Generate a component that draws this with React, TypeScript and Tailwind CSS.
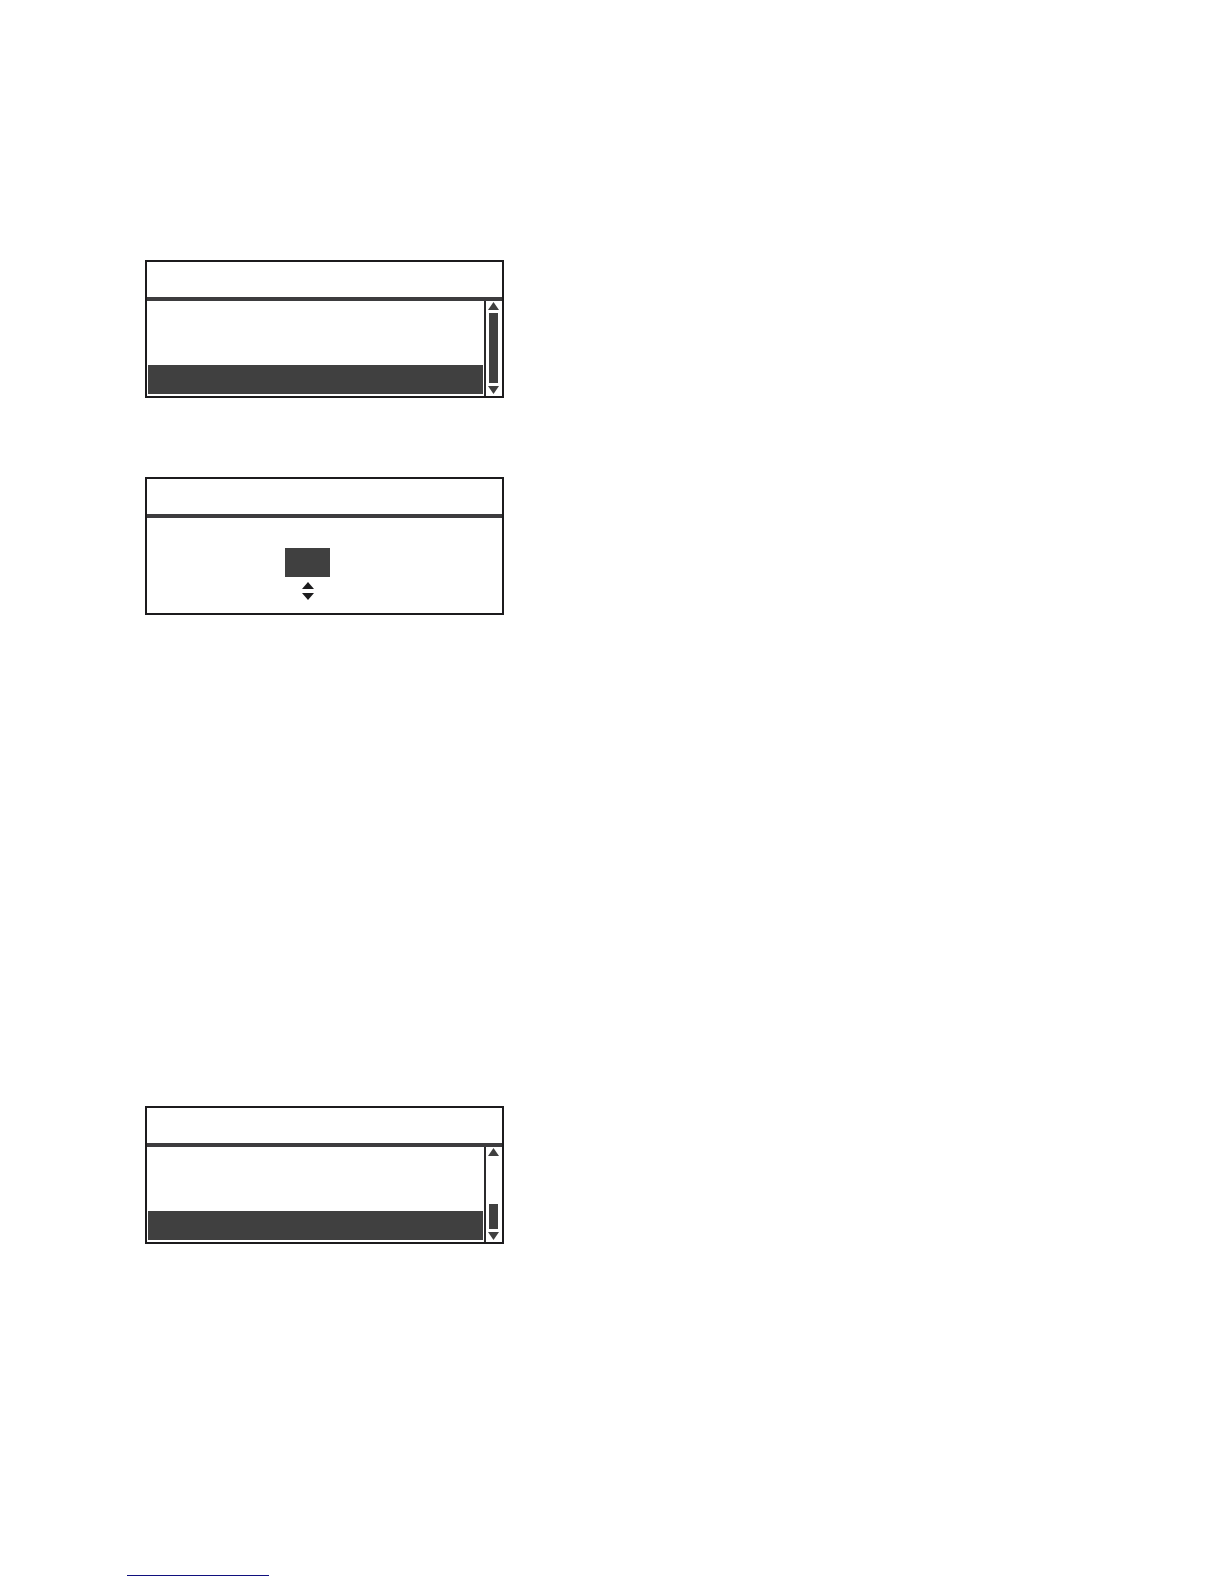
import type { ReactNode } from 'react'

function ArrowUp({ className }: { className?: string }) {
  return (
    <svg viewBox="0 0 12 8" preserveAspectRatio="none" className={className} fill="currentColor" aria-hidden="true">
      <path d="M6 0 L12 8 H0 Z" />
    </svg>
  )
}

function ArrowDown({ className }: { className?: string }) {
  return (
    <svg viewBox="0 0 12 8" preserveAspectRatio="none" className={className} fill="currentColor" aria-hidden="true">
      <path d="M0 0 H12 L6 8 Z" />
    </svg>
  )
}

function Screen({ children }: { children: ReactNode }) {
  return (
    <section className="flex w-full max-w-[359px] flex-col border-2 border-[#1c1b1d]">
      <header className="h-[39px] border-b-4 border-[#3d3c3e]" />
      {children}
    </section>
  )
}

function ListScreen({ thumb }: { thumb: 'full' | 'end' }) {
  return (
    <Screen>
      <div className="flex h-[95px]">
        <ul className="flex flex-1 flex-col justify-end px-px pb-[2px]">
          <li className="h-[29px] bg-[#404040]" />
        </ul>
        <div className="flex w-[18px] flex-col items-center border-l-2 border-[#2b2a2c] pt-px pr-px pb-[2px] text-[#404040]">
          <button type="button" aria-label="Scroll up">
            <ArrowUp className="block h-2 w-[11px]" />
          </button>
          <div className="flex w-[9px] flex-1 flex-col justify-end py-[3px]">
            <div className={thumb === 'full' ? 'flex-1 bg-[#404040]' : 'h-[25px] bg-[#404040]'} />
          </div>
          <button type="button" aria-label="Scroll down">
            <ArrowDown className="block h-2 w-[11px]" />
          </button>
        </div>
      </div>
    </Screen>
  )
}

function ValueScreen() {
  return (
    <Screen>
      <div className="flex h-[95px] flex-col items-center pt-[30px] pr-[34px] text-[#1c1b1d]">
        <div className="h-[29px] w-[45px] bg-[#404040]" />
        <div className="flex flex-col gap-1 pt-[5px] pl-px">
          <button type="button" aria-label="Increase">
            <ArrowUp className="block h-[7px] w-3" />
          </button>
          <button type="button" aria-label="Decrease">
            <ArrowDown className="block h-[7px] w-3" />
          </button>
        </div>
      </div>
    </Screen>
  )
}

export default function App() {
  return (
    <div className="bg-white px-[127px] pt-[260px] pb-2 font-['Liberation_Sans',sans-serif]">
      <main className="flex flex-col pl-[18px]">
        <ListScreen thumb="full" />
        <div className="mt-[79px]">
          <ValueScreen />
        </div>
        <div className="mt-[491px]">
          <ListScreen thumb="end" />
        </div>
      </main>
      <footer className="mt-[331px]">
        <a href="#contents" aria-label="Contents" className="block h-px w-[142px] bg-[#10107e]" />
      </footer>
    </div>
  )
}
